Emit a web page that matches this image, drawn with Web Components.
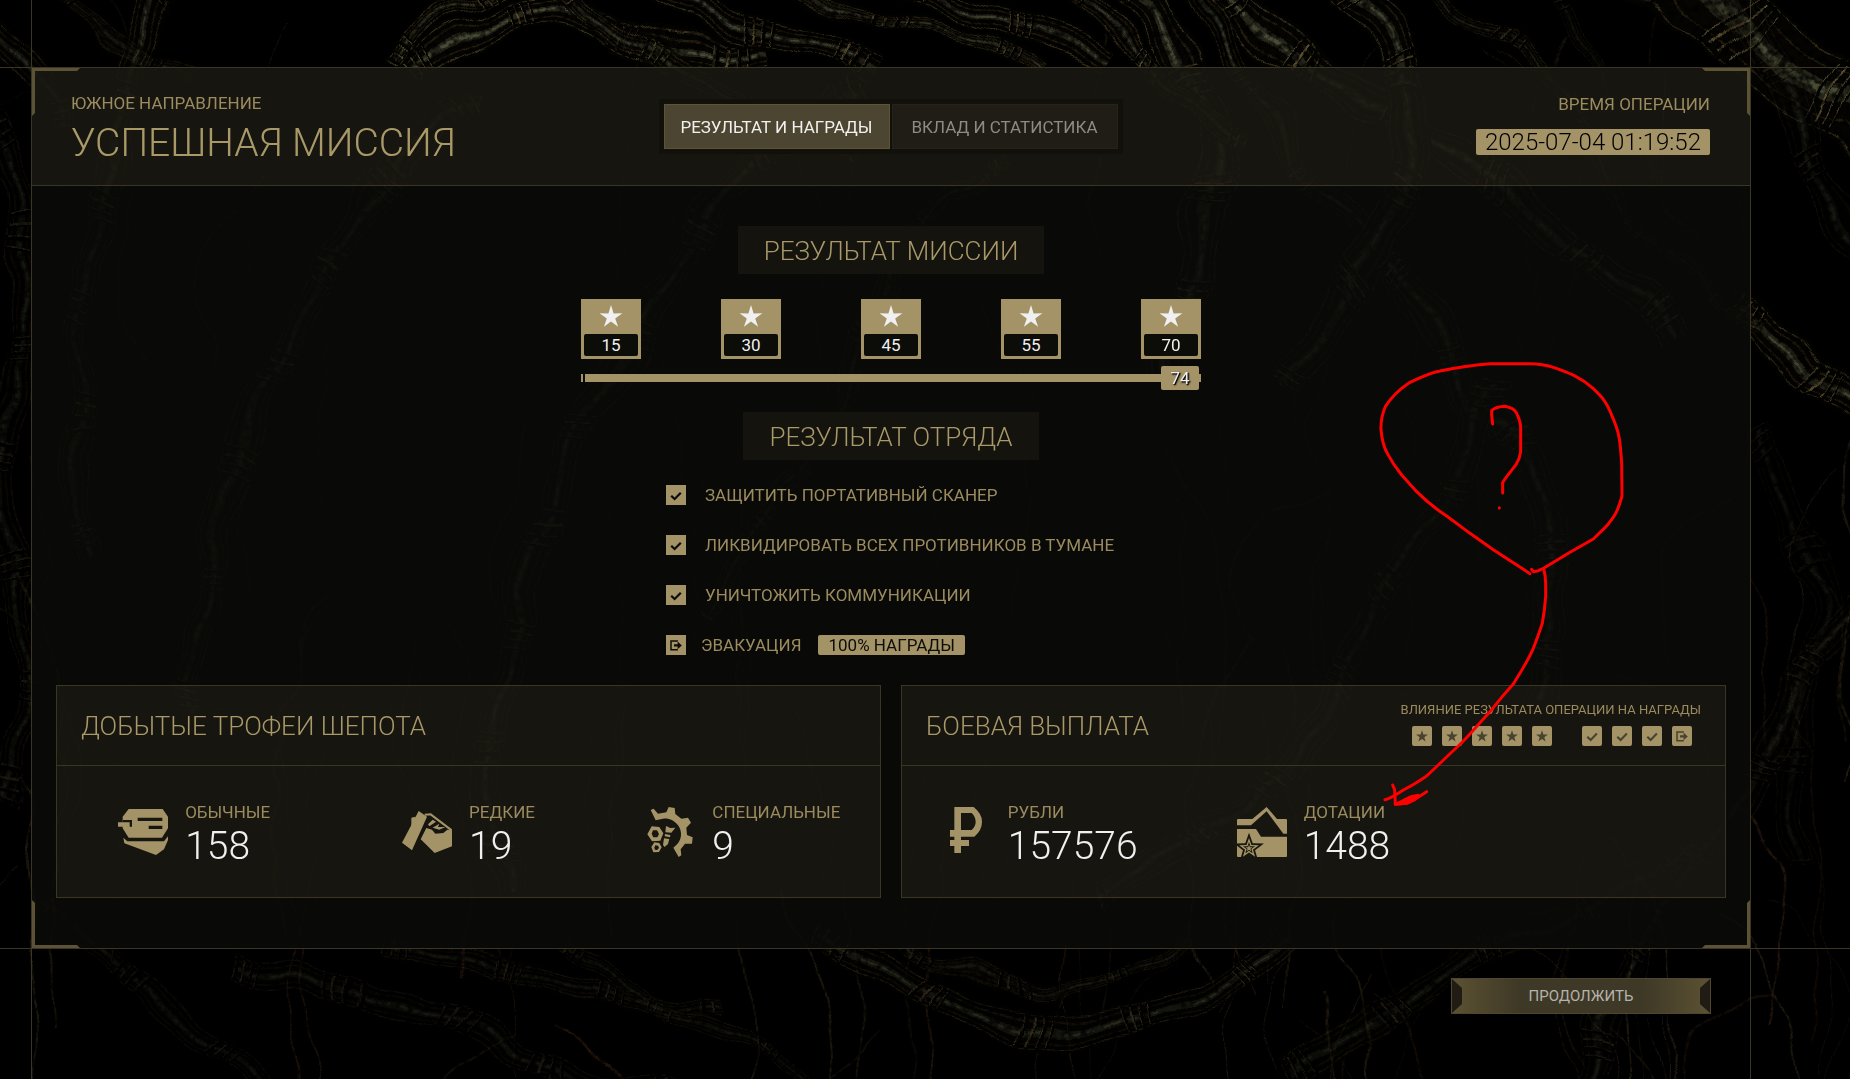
<!DOCTYPE html>
<html lang="ru">
<head>
<meta charset="utf-8">
<meta name="viewport" content="width=device-width, initial-scale=1">
<title>Успешная миссия</title>
<style>
    :root {
        --gold: #a39367;
        --gold-text: #9b8b5e;
        --gold-title: #a99969;
        --gold-dim: #5c5235;
        --line: #3b3524;
        --panel: #17160f;
        --ink: #0c0c09;
        --white: #f0f0f0;
    }
    body {
        margin: 0;
        background: #000;
        color: var(--gold-text);
        font: 400 17px/20px Roboto, "Liberation Sans", sans-serif;
        overflow: hidden;
    }
</style>
</head>
<body>
<mission-screen>
    <mission-header slot="header" region="ЮЖНОЕ НАПРАВЛЕНИЕ" heading="УСПЕШНАЯ МИССИЯ" time="2025-07-04 01:19:52">
        <tab-switch>
            <button role="tab" aria-selected="true">РЕЗУЛЬТАТ И НАГРАДЫ</button>
            <button role="tab" aria-selected="false">ВКЛАД И СТАТИСТИКА</button>
        </tab-switch>
    </mission-header>

    <section-title>РЕЗУЛЬТАТ МИССИИ</section-title>
    <mission-score marks="15,30,45,55,70" value="74"></mission-score>
    <section-title>РЕЗУЛЬТАТ ОТРЯДА</section-title>
    <squad-goals>
        <squad-goal>ЗАЩИТИТЬ ПОРТАТИВНЫЙ СКАНЕР</squad-goal>
        <squad-goal>ЛИКВИДИРОВАТЬ ВСЕХ ПРОТИВНИКОВ В ТУМАНЕ</squad-goal>
        <squad-goal>УНИЧТОЖИТЬ КОММУНИКАЦИИ</squad-goal>
        <squad-goal exit reward="100% НАГРАДЫ">ЭВАКУАЦИЯ</squad-goal>
    </squad-goals>

    <reward-panel slot="panels" heading="ДОБЫТЫЕ ТРОФЕИ ШЕПОТА">
        <reward-item icon="common" label="ОБЫЧНЫЕ" value="158"></reward-item>
        <reward-item icon="rare" label="РЕДКИЕ" value="19"></reward-item>
        <reward-item icon="special" label="СПЕЦИАЛЬНЫЕ" value="9"></reward-item>
    </reward-panel>
    <reward-panel slot="panels" heading="БОЕВАЯ ВЫПЛАТА">
        <reward-impact slot="extra" label="ВЛИЯНИЕ РЕЗУЛЬТАТА ОПЕРАЦИИ НА НАГРАДЫ" stars="5" checks="3"></reward-impact>
        <reward-item icon="rouble" label="РУБЛИ" value="157576"></reward-item>
        <reward-item icon="wallet" label="ДОТАЦИИ" value="1488"></reward-item>
    </reward-panel>

    <bevel-button slot="footer">ПРОДОЛЖИТЬ</bevel-button>
    <pen-note slot="note"></pen-note>
</mission-screen>

<script>
    function starPoints(cx, cy, outer, inner) {
        const points = [];
        for (let i = 0; i < 10; i++) {
            const r = i % 2 ? inner : outer;
            const a = Math.PI * (i / 5 - 0.5);
            points.push(`${(cx + r * Math.cos(a)).toFixed(1)},${(cy + r * Math.sin(a)).toFixed(1)}`);
        }
        return points.join(" ");
    }

    function star(cx, cy, outer, inner, fill = "currentColor") {
        return `<polygon points="${starPoints(cx, cy, outer, inner)}" fill="${fill}"/>`;
    }

    // big loot icons share a 150 unit box, small marks a 20 unit box
    const ICONS = {
        star: [20, star(10, 10.5, 6.2, 2.4)],
        bigstar: [24, star(12, 13, 12, 4.4)],
        check: [20, `<path d="M5.3 10.8 8.6 14 14.9 7.6" fill="none" stroke="currentColor" stroke-width="2.1"/>`],
        exit: [20, `<path d="M11.2 6.4V5.9H5V14.8H11.2V14.2" fill="none" stroke="currentColor" stroke-width="1.5"/>
            <path d="M8 9.2H11.6V6.6L15.8 10.4 11.6 14.2V11.6H8Z" fill="currentColor"/>`],
        common: [150, `<path fill="currentColor" d="M32 6H134L150 29V64L132 92H32L14 64V59H0V46H14V29Z"/>
            <path fill="var(--panel)" d="M14 39H42V59H35V46H14ZM59 32H133V42H59ZM92 56H133V66H92Z"/>
            <path fill="currentColor" d="M16 92 28 103H138L150 88V99L138 127 114 144 19 109Z"/>`],
        rare: [150, `<path fill="currentColor" d="M28 32 40 29V42L28 60Z"/>
            <path fill="currentColor" d="M50 12 75 29 30 130 0 107Z"/>
            <path fill="none" stroke="currentColor" stroke-width="6" d="M68 23 86 22 149 70"/>
            <path fill="currentColor" d="M56 97 73 63 90 68 100 80 124 78 136 68 150 70V118L98 138ZM78 52 92 38 102 44 82 58Z"/>
            <path fill="currentColor" d="M92 62 112 50 108 60 130 60 112 68Z"/>`],
        special: [150, `<path fill="currentColor" d="M17 9 26 5 39 20 64 16 71 0 89 3 91 21 109 35 129 32 138 47 124 62 126 84 143 91 141 110 120 110 107 127 109 145 101 150 85 122 97 111C114 92 109 68 99 55 88 40 70 32 54 35L32 40Z"/>
            <path fill="currentColor" fill-rule="evenodd" d="M20 58 43 60 55 79 46 101 21 103 7 82ZM24 70 36 70 42 81 37 91 25 91 20 80Z"/>
            <path fill="currentColor" fill-rule="evenodd" d="M28 106 43 108 50 121 42 135 25 136 19 120ZM31 115 39 116 42 122 37 129 30 128 28 122Z"/>
            <path fill="currentColor" d="M63 57 76 63 91 62 79 77 61 76ZM60 81 76 84 75 91 59 88ZM57 94 73 96 69 111 59 120 54 114Z"/>`],
        rouble: [150, `<path fill="currentColor" fill-rule="evenodd" d="M40 0H98Q123 20 123 44 123 70 100 89H60V99H84V117H60V138H40V117H27V99H40V89H27V69H40ZM60 18V69H92Q104 58 104 44 104 30 92 18Z"/>`],
        wallet: [150, `<path fill="currentColor" d="M0 39Q0 36 3 36H46L89 0 120 36H147Q150 36 150 39V80H139L89 13 42 55H0Z"/>
            <path fill="currentColor" d="M0 66H57L72 89H150V147Q150 150 147 150H3Q0 150 0 147Z"/>
            <svg width="150" height="150">${star(36, 124, 47, 19, "var(--panel)")}${star(36, 124, 31, 12.5)}${star(36, 124, 19, 7.5, "var(--panel)")}${star(36, 124, 11, 4.5)}
            <path d="M21 150Q36 136 51 150Z" fill="var(--panel)"/></svg>`]
    };

    class BaseElement extends HTMLElement {
        connectedCallback() {
            if (this.shadowRoot) {
                return;
            }
            this.attachShadow({ mode: "open" });
            this.shadowRoot.innerHTML = this.template();
        }
    }

    class GameIcon extends BaseElement {
        template() {
            const [box, shape] = ICONS[this.getAttribute("name")];
            return `
                <style>
                    :host { display: block; flex: none; width: 20px; height: 20px; }
                    svg { display: block; width: 100%; height: 100%; }
                </style>
                <svg viewBox="0 0 ${box} ${box}" aria-hidden="true">${shape}</svg>
            `;
        }
    }

    /* dark tangle of ribbed roots behind the whole screen */
    class RootBackdrop extends BaseElement {
        static #roots = [
            // path, width, brightness
            ["M1640 -40C1700 -10 1750 20 1785 60S1850 90 1880 130", 74, 1],
            ["M1700 -40C1740 10 1780 40 1800 120S1830 220 1880 260", 34, 0.3],
            ["M1740 290C1780 350 1800 370 1870 420", 28, 0.9],
            ["M1760 430C1790 520 1830 560 1820 640S1770 760 1790 860", 30, 0.2],
            ["M1870 560C1830 640 1800 700 1740 800S1620 930 1580 1090", 30, 0.3],
            ["M1215 -20C1280 60 1350 90 1430 140S1560 220 1680 340", 34, 1],
            ["M1180 -30C1240 50 1260 120 1330 190S1400 300 1450 340", 22, 0.7],
            ["M1340 -20C1400 40 1430 70 1400 180S1330 260 1290 390", 36, 0.9],
            ["M1400 -20C1460 30 1520 20 1570 110S1660 260 1760 320", 14, 0.5],
            ["M1550 -20C1590 60 1640 160 1700 240", 16, 0.3],
            ["M1120 -20C1180 40 1215 100 1210 190S1190 300 1160 380", 36, 1],
            ["M1060 -20C1130 30 1150 90 1240 140", 18, 0.9],
            ["M1390 250C1450 310 1440 380 1500 430S1560 560 1540 700", 34, 0.8],
            ["M1500 380C1460 480 1400 560 1340 680S1240 820 1100 900", 28, 0.7],
            ["M870 90C780 120 700 210 660 300S540 480 520 600 480 780 500 900", 32, 0.7],
            ["M1010 160C940 180 860 300 840 380S760 520 700 620", 18, 0.6],
            ["M410 80C470 20 530 0 590 20S650 60 760 50", 30, 1],
            ["M390 70C430 10 470 -10 540 -20", 16, 0.9],
            ["M560 -20C580 30 640 30 700 80S820 110 860 160", 18, 0.8],
            ["M480 100C400 130 330 230 290 340S180 560 200 720", 28, 0.7],
            ["M170 -20C120 60 130 110 105 190S60 420 90 560", 28, 0.7],
            ["M60 -20C90 40 120 60 190 80", 12, 0.4],
            ["M-20 20C20 40 50 80 60 130", 26, 0.6],
            ["M-10 120C30 180 10 240 20 300S-20 430 10 560 30 700 0 800", 24, 0.3],
            ["M900 -20C960 20 1040 20 1100 60", 26, 0.9],
            ["M780 -20C840 30 980 20 1040 70", 12, 0.8],
            ["M640 -20C720 40 800 20 880 70", 26, 0.9],
            ["M820 930C900 960 940 1030 1060 1025S1220 1000 1290 930", 28, 0.55],
            ["M900 940C960 980 1020 1000 1090 985S1170 950 1190 930", 12, 0.4],
            ["M230 960C330 1010 430 990 500 1040S640 1080 700 1100", 26, 0.3],
            ["M1290 1080C1360 1040 1400 980 1480 950S1620 900 1700 840", 28, 0.35],
            ["M380 940C500 960 560 1000 720 1010", 18, 0.35],
            ["M560 940C620 1000 760 1040 820 1100", 16, 0.3],
            ["M40 900C110 960 160 1000 280 1100", 24, 0.25]
        ];

        strands() {
            // fixed seed, the tangle is the same on every load
            let seed = 7;
            const rnd = () => (seed = (seed * 16807) % 2147483647) / 2147483647;
            let out = "";
            for (let i = 0; i < 150; i++) {
                const x = rnd() * 1900 - 30;
                const y = rnd() * 1100 - 60;
                const dx = (rnd() - 0.5) * 300;
                const dy = 120 + rnd() * 260;
                out += `<path d="M${x | 0} ${y | 0}q${dx | 0} ${dy / 3 | 0} ${dx / 2 | 0} ${dy | 0}" stroke="${i % 3 ? "#1d180c" : "#24150b"}" stroke-width="${1 + i % 2}" opacity="${(0.3 + rnd() * 0.6).toFixed(2)}"/>`;
            }
            return out;
        }

        root([d, w, light]) {
            return `<g opacity="${light}">
                <path d="${d}" stroke="#030301" stroke-width="${w + 6}"/>
                <path d="${d}" stroke="#352c19" stroke-width="${w}"/>
                <path d="${d}" stroke="#030302" stroke-width="${w - 2}"/>
                <path d="${d}" stroke="#1f190c" stroke-width="${w * 0.68 | 0}"/>
                <path d="${d}" stroke="#050402" stroke-width="${(w * 0.68 | 0) - 3}"/>
                <path d="${d}" stroke="#202016" stroke-width="${w * 0.26 | 0}"/>
                <path d="${d}" stroke="#3c3f2d" stroke-width="${w * 0.1 | 0}" stroke-dasharray="34 12 60 25"/>
                <path d="${d}" stroke="#020201" stroke-width="${w}" stroke-dasharray="4 5 3 6 4 5 3 80"/>
                <path d="${d}" stroke="#4d4329" stroke-width="${w * 0.86 | 0}" stroke-dasharray="1 8 2 7 1 8 1 82"/>
            </g>`;
        }

        template() {
            return `
                <style>
                    :host { display: block; overflow: hidden; }
                    svg { display: block; width: 100%; height: 100%; }
                </style>
                <svg viewBox="0 0 1850 1079" preserveAspectRatio="xMidYMid slice" fill="none" aria-hidden="true">
                    <filter id="rough" x="0" y="0" width="100%" height="100%" color-interpolation-filters="sRGB">
                        <feTurbulence type="fractalNoise" baseFrequency="0.011" numOctaves="2" seed="4" result="bend"/>
                        <feDisplacementMap in="SourceGraphic" in2="bend" scale="44" xChannelSelector="R" yChannelSelector="G" result="bent"/>
                        <feTurbulence type="fractalNoise" baseFrequency="0.16" numOctaves="2" seed="9"/>
                        <feColorMatrix values="0 3 0 0 -0.8  0 3 0 0 -0.8  0 3 0 0 -0.8  0 0 0 0 1" result="grain"/>
                        <feComposite in="bent" in2="grain" operator="arithmetic" k1="0.9" k2="0.3"/>
                    </filter>
                    <g filter="url(#rough)">
                        <rect width="1850" height="1079" fill="#000001"/>
                        ${this.strands()}
                        ${RootBackdrop.#roots.map(r => this.root(r)).join("")}
                    </g>
                </svg>
            `;
        }
    }

    class MissionScreen extends BaseElement {
        template() {
            return `
                <style>
                    :host {
                        display: flex;
                        flex-direction: column;
                        box-sizing: border-box;
                        min-height: 100vh;
                        padding: 67px 99px 0 31px;
                        position: relative;
                        overflow: hidden;
                    }
                    root-backdrop { position: absolute; inset: 0; z-index: -1; }
                    .frame {
                        position: relative;
                        display: flex;
                        flex-direction: column;
                        border: 1px solid var(--line);
                        background: rgba(11, 11, 8, 0.85);
                        padding-bottom: 50px;
                    }
                    /* guide lines run past the frame to the window edges */
                    .frame::before, .frame::after {
                        content: "";
                        position: absolute;
                        pointer-events: none;
                    }
                    .frame::before {
                        inset: -1px -100vw;
                        border: solid var(--line);
                        border-width: 1px 0;
                    }
                    .frame::after {
                        inset: -100vh -1px;
                        border: solid var(--line);
                        border-width: 0 1px;
                    }
                    .corner {
                        position: absolute;
                        width: 48px;
                        height: 48px;
                        box-sizing: border-box;
                        border: 0 solid var(--gold-dim);
                    }
                    .tl { left: 0; top: 0; border-width: 3px 0 0 3px; clip-path: polygon(0 0, 100% 0, 45px 3px, 3px 45px, 0 100%); }
                    .tr { right: 0; top: 0; border-width: 3px 3px 0 0; clip-path: polygon(0 0, 100% 0, 100% 100%, 45px 45px, 3px 3px); }
                    .bl { left: 0; bottom: 0; border-width: 0 0 3px 3px; clip-path: polygon(0 0, 3px 3px, 45px 45px, 100% 100%, 0 100%); }
                    .br { right: 0; bottom: 0; border-width: 0 3px 3px 0; clip-path: polygon(100% 0, 100% 100%, 0 100%, 3px 45px, 45px 3px); }
                    main {
                        display: flex;
                        flex-direction: column;
                        align-items: center;
                        padding: 40px 24px 30px;
                    }
                    .panels {
                        display: grid;
                        grid-template-columns: 1fr 1fr;
                        gap: 20px;
                        padding: 0 24px;
                    }
                    footer {
                        display: flex;
                        justify-content: flex-end;
                        padding: 29px 40px;
                    }
                </style>
                <root-backdrop></root-backdrop>
                <div class="frame">
                    <slot name="header"></slot>
                    <main><slot></slot></main>
                    <div class="panels"><slot name="panels"></slot></div>
                    <i class="corner tl"></i><i class="corner tr"></i>
                    <i class="corner bl"></i><i class="corner br"></i>
                </div>
                <footer><slot name="footer"></slot></footer>
                <slot name="note"></slot>
            `;
        }
    }

    class MissionHeader extends BaseElement {
        template() {
            return `
                <style>
                    :host {
                        display: grid;
                        grid-template-columns: 1fr auto 1fr;
                        background: rgba(163, 147, 103, 0.085);
                        border-bottom: 1px solid var(--line);
                        padding: 24px 40px 24px 39px;
                        height: 69px;
                    }
                    .title { display: flex; flex-direction: column; gap: 10px; padding-top: 1px; }
                    h1 { margin: 0; color: var(--gold-title); font: 300 39px/40px Roboto, "Liberation Sans", sans-serif; }
                    .title p { margin: 0; }
                    .time { display: flex; flex-direction: column; align-items: flex-end; gap: 15px; padding-top: 2px; }
                    time {
                        font-weight: 300;
                        font-size: 24px;
                        line-height: 26px;
                        padding: 0 9px;
                        border-radius: 2px;
                        background: var(--gold);
                        color: #000;
                    }
                    ::slotted(tab-switch) { margin-top: 7px; }
                </style>
                <div class="title">
                    <p>${this.getAttribute("region")}</p>
                    <h1>${this.getAttribute("heading")}</h1>
                </div>
                <slot></slot>
                <div class="time">
                    <span>ВРЕМЯ ОПЕРАЦИИ</span>
                    <time>${this.getAttribute("time")}</time>
                </div>
            `;
        }
    }

    class TabSwitch extends BaseElement {
        connectedCallback() {
            super.connectedCallback();
            this.setAttribute("role", "tablist");
            this.addEventListener("click", this.onClick);
        }

        onClick(e) {
            const tab = e.target.closest("button");
            if (!tab) {
                return;
            }
            for (const button of this.querySelectorAll("button")) {
                button.setAttribute("aria-selected", button === tab);
            }
        }

        template() {
            return `
                <style>
                    :host {
                        display: grid;
                        grid-template-columns: 1fr 1fr;
                        gap: 2px;
                        align-self: start;
                        padding: 5px;
                        background: #11100b;
                    }
                    ::slotted(button) {
                        height: 45px;
                        min-width: 226px;
                        padding: 0 14px;
                        border: 1px solid #26221a;
                        background: #201d16;
                        color: #8d8b86;
                        font: inherit;
                        cursor: pointer;
                    }
                    ::slotted(button[aria-selected="true"]) {
                        border-color: #5d5434;
                        background: #4c4531;
                        color: #f0f0ee;
                    }
                </style>
                <slot></slot>
            `;
        }
    }

    class SectionTitle extends BaseElement {
        template() {
            return `
                <style>
                    :host { display: block; background: #14130e; padding: 0 26px; }
                    h2 { margin: 0; color: var(--gold-title); font: 300 26px/50px Roboto, "Liberation Sans", sans-serif; height: 48px; }
                </style>
                <h2><slot></slot></h2>
            `;
        }
    }

    class MissionScore extends BaseElement {
        template() {
            const marks = this.getAttribute("marks").split(",");
            const value = this.getAttribute("value");
            return `
                <style>
                    :host { display: flex; flex-direction: column; gap: 7px; width: 620px; max-width: 100%; padding: 25px 0 22px; }
                    ol { display: flex; justify-content: space-between; margin: 0; padding: 0; list-style: none; }
                    li {
                        display: flex;
                        flex-direction: column;
                        align-items: center;
                        justify-content: space-between;
                        box-sizing: border-box;
                        width: 60px;
                        height: 60px;
                        padding: 5px 3px 3px;
                        background: var(--gold);
                        color: var(--white);
                    }
                    game-icon { width: 24px; height: 24px; }
                    li span {
                        align-self: stretch;
                        background: var(--ink);
                        border-radius: 2px;
                        line-height: 22px;
                        text-align: center;
                    }
                    .bar { display: flex; align-items: center; }
                    .bar::before { content: ""; width: 2px; height: 8px; background: var(--gold); margin-right: 2px; }
                    .bar::after { content: ""; width: 2px; height: 8px; background: var(--gold); }
                    .fill { flex: 1; height: 8px; background: var(--gold); }
                    .value {
                        width: 38px;
                        line-height: 24px;
                        border-radius: 2px;
                        background: var(--gold);
                        color: var(--white);
                        text-align: center;
                        text-shadow: 1px 1px 1px #000, 1px 1px 2px #000;
                    }
                </style>
                <ol>${marks.map(m => `<li><game-icon name="bigstar"></game-icon><span>${m}</span></li>`).join("")}</ol>
                <div class="bar" role="progressbar" aria-label="Результат миссии" aria-valuenow="${value}" aria-valuemax="75">
                    <div class="fill"></div><div class="value">${value}</div>
                </div>
            `;
        }
    }

    class SquadGoals extends BaseElement {
        template() {
            return `
                <style>
                    :host { display: flex; flex-direction: column; gap: 30px; width: 450px; max-width: 100%; padding-top: 25px; }
                </style>
                <slot></slot>
            `;
        }
    }

    class SquadGoal extends BaseElement {
        template() {
            const exit = this.hasAttribute("exit");
            const reward = this.getAttribute("reward");
            return `
                <style>
                    :host { display: flex; align-items: center; gap: 17px; height: 20px; }
                    label { display: flex; align-items: center; gap: 19px; }
                    input {
                        appearance: none;
                        width: 20px;
                        height: 20px;
                        margin: 0;
                        background: var(--gold);
                    }
                    input:checked::before {
                        content: "";
                        display: block;
                        width: 20px;
                        height: 20px;
                        background: var(--ink);
                        clip-path: polygon(22% 57%, 30% 50%, 43% 63%, 70% 35%, 78% 42%, 43% 78%);
                    }
                    .exit { display: flex; align-items: center; gap: 15px; }
                    game-icon { background: var(--gold); color: var(--ink); }
                    .reward { padding: 0 10px; border-radius: 2px; background: var(--gold); color: var(--ink); }
                </style>
                ${exit
                    ? `<span class="exit"><game-icon name="exit"></game-icon><slot></slot></span>`
                    : `<label><input type="checkbox" checked><slot></slot></label>`}
                ${reward ? `<span class="reward">${reward}</span>` : ""}
            `;
        }
    }

    class RewardPanel extends BaseElement {
        template() {
            return `
                <style>
                    :host {
                        display: block;
                        border: 1px solid var(--line);
                        background: rgba(163, 147, 103, 0.085);
                    }
                    header {
                        display: flex;
                        justify-content: space-between;
                        border-bottom: 1px solid var(--line);
                        padding: 0 24px;
                        height: 79px;
                    }
                    h2 { margin: 0; color: var(--gold-title); font: 300 26px/80px Roboto, "Liberation Sans", sans-serif; }
                    .items {
                        display: grid;
                        grid-template-columns: repeat(3, 1fr);
                        justify-items: center;
                        padding: 36px 0 31px;
                    }
                </style>
                <header><h2>${this.getAttribute("heading")}</h2><slot name="extra"></slot></header>
                <div class="items"><slot></slot></div>
            `;
        }
    }

    class RewardImpact extends BaseElement {
        template() {
            const icon = (name, count) => `<game-icon name="${name}"></game-icon>`.repeat(count);
            return `
                <style>
                    :host { display: flex; flex-direction: column; align-items: flex-end; gap: 8px; padding-top: 16px; font-size: 13px; line-height: 16px; }
                    .marks { display: flex; gap: 30px; padding-right: 9px; }
                    .marks div { display: flex; gap: 10px; }
                    game-icon { border-radius: 2px; background: var(--gold); color: #48422e; }
                </style>
                <span>${this.getAttribute("label")}</span>
                <div class="marks">
                    <div>${icon("star", +this.getAttribute("stars"))}</div>
                    <div>${icon("check", +this.getAttribute("checks"))}${icon("exit", 1)}</div>
                </div>
            `;
        }
    }

    class RewardItem extends BaseElement {
        template() {
            return `
                <style>
                    :host { display: flex; align-items: flex-start; gap: 17px; }
                    game-icon { width: 50px; height: 50px; color: var(--gold); margin-top: 5px; }
                    dl { display: grid; gap: 4px; margin: 0; }
                    dt { line-height: 20px; }
                    dd { margin: 0; font-weight: 300; font-size: 39px; line-height: 40px; color: var(--white); }
                </style>
                <game-icon name="${this.getAttribute("icon")}"></game-icon>
                <dl>
                    <dt>${this.getAttribute("label")}</dt>
                    <dd>${this.getAttribute("value")}</dd>
                </dl>
            `;
        }
    }

    class BevelButton extends BaseElement {
        template() {
            return `
                <style>
                    button {
                        display: grid;
                        grid-template-columns: 10px 1fr 10px;
                        align-items: stretch;
                        width: 260px;
                        height: 36px;
                        padding: 0;
                        border: 1px solid #4e472e;
                        background: linear-gradient(90deg, #5c5233, #3e3826 26%, #3e3826 74%, #5c5233);
                        color: #b5b3ac;
                        font: 400 15px/34px Roboto, "Liberation Sans", sans-serif;
                        cursor: pointer;
                    }
                    i { background: #201c13; }
                    i:first-child { clip-path: polygon(0 0, 100% 9px, 100% 25px, 0 100%); }
                    i:last-child { clip-path: polygon(100% 0, 0 9px, 0 25px, 100% 100%); }
                </style>
                <button type="button"><i></i><span><slot></slot></span><i></i></button>
            `;
        }
    }

    /* hand-drawn bubble with a question mark and an arrow */
    class PenNote extends BaseElement {
        template() {
            return `
                <style>
                    :host { position: absolute; right: 200px; top: 340px; width: 290px; height: 480px; pointer-events: none; }
                    svg { display: block; width: 100%; height: 100%; }
                </style>
                <svg viewBox="0 0 870 1440" fill="none" stroke="#f00" stroke-width="9" stroke-linecap="round" stroke-linejoin="round" aria-hidden="true">
                    <path d="M515 688 520 695 535 692 552 684 625 640 700 597 735 563C765 530 775 510 786 468L785 370C780 290 776 275 757 230 740 185 725 170 700 146 660 110 625 98 580 82 550 72 530 71 510 71H390C330 76 290 82 240 93 215 97 190 108 150 127 115 150 95 170 76 200 65 225 62 240 63 270 66 300 70 320 82 340 95 365 105 380 125 405L170 455C200 485 220 502 260 528L330 580 400 629 430 649 490 688 510 701"/>
                    <path d="M398 252 395 225V212Q408 200 435 199 462 204 470 220C480 240 482 250 482 265V335Q480 355 468 374L440 410 428 427V459"/>
                    <path d="M418 503V504"/>
                    <path d="M551 686Q557 710 557 730V770L553 810 547 850 533 890 520 925C505 960 480 1000 460 1032L425 1072 390 1115C350 1158 320 1195 295 1218 260 1250 230 1280 200 1308 165 1332 150 1340 130 1350 105 1367 90 1376 75 1379"/>
                    <path d="M98 1335 104 1350 106 1393 140 1390 165 1378 200 1355"/>
                    <path fill="#f00" d="M106 1393 140 1390 165 1378 175 1366 150 1371 125 1384Z"/>
                </svg>
            `;
        }
    }

    customElements.define("game-icon", GameIcon);
    customElements.define("root-backdrop", RootBackdrop);
    customElements.define("mission-screen", MissionScreen);
    customElements.define("mission-header", MissionHeader);
    customElements.define("tab-switch", TabSwitch);
    customElements.define("section-title", SectionTitle);
    customElements.define("mission-score", MissionScore);
    customElements.define("squad-goals", SquadGoals);
    customElements.define("squad-goal", SquadGoal);
    customElements.define("reward-panel", RewardPanel);
    customElements.define("reward-impact", RewardImpact);
    customElements.define("reward-item", RewardItem);
    customElements.define("bevel-button", BevelButton);
    customElements.define("pen-note", PenNote);
</script>
</body>
</html>
